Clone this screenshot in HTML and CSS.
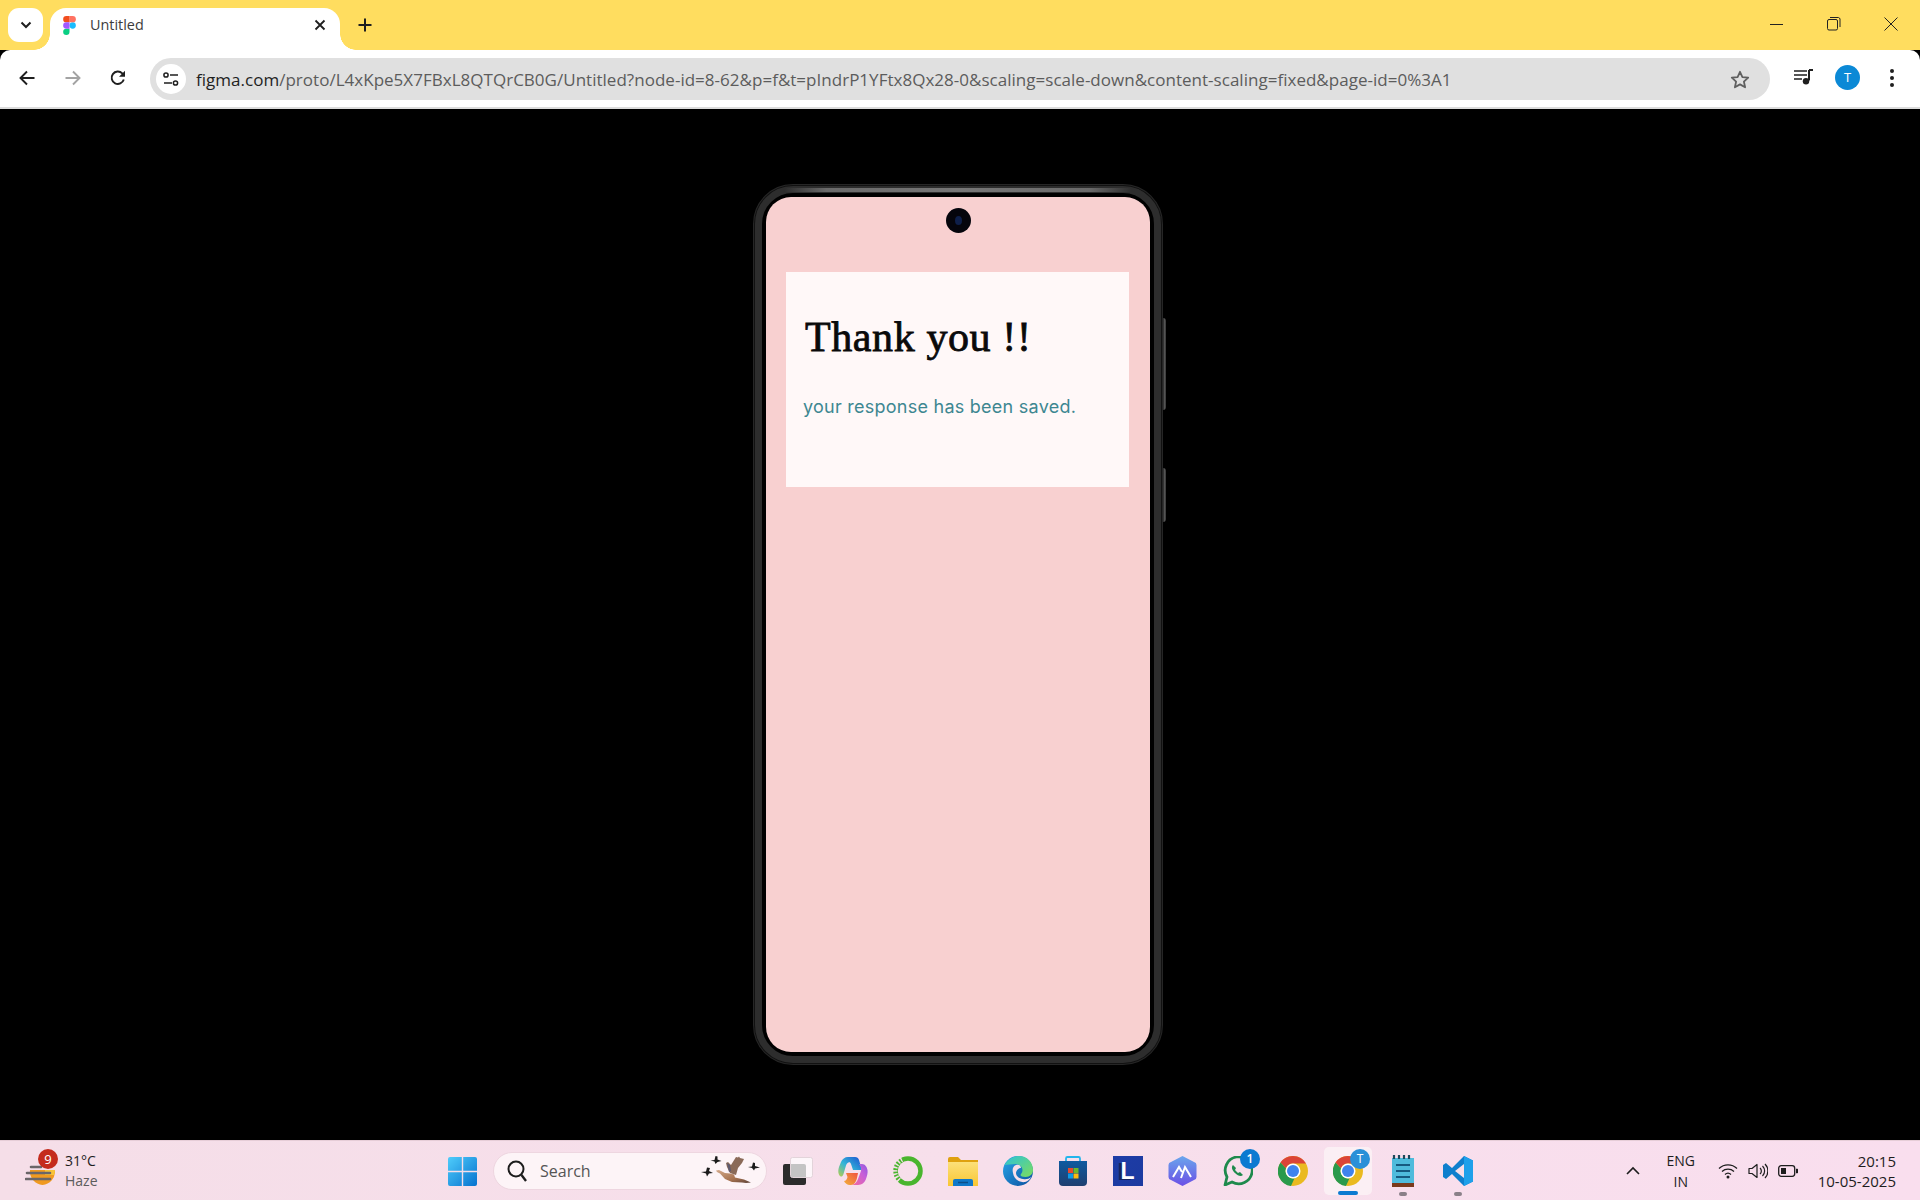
FILE: index.html
```html
<!DOCTYPE html>
<html lang="en">
<head>
<meta charset="utf-8">
<title>Untitled</title>
<link rel="stylesheet" href="styles.css">
</head>
<body>
<div class="app">
  <header class="tabstrip">
    <button class="tab-menu">
      <svg width="12" height="8" viewBox="0 0 12 8"><path d="M1.500 1.500 6 6l4.500-4.500" fill="none" stroke="#1f1f1f" stroke-width="2"/></svg>
    </button>
    <div class="tab">
      <svg class="favicon" width="13" height="19" viewBox="0 0 38 57">
        <path d="M19 28.500a9.500 9.500 0 1 1 19 0 9.500 9.500 0 0 1-19 0z" fill="#1abcfe"/>
        <path d="M0 47.500A9.500 9.500 0 0 1 9.500 38H19v9.500a9.500 9.500 0 0 1-19 0z" fill="#0acf83"/>
        <path d="M19 0v19h9.500a9.500 9.500 0 0 0 0-19H19z" fill="#ff7262"/>
        <path d="M0 9.500A9.500 9.500 0 0 0 9.500 19H19V0H9.500A9.500 9.500 0 0 0 0 9.500z" fill="#f24e1e"/>
        <path d="M0 28.500A9.500 9.500 0 0 0 9.500 38H19V19H9.500A9.500 9.500 0 0 0 0 28.500z" fill="#a259ff"/>
      </svg>
      <span class="tab-title">Untitled</span>
      <svg class="tab-close" width="12" height="12" viewBox="0 0 12 12"><path d="M1.500 1.500l9 9m0-9l-9 9" stroke="#1f1f1f" stroke-width="1.800"/></svg>
    </div>
    <svg class="new-tab" width="14" height="14" viewBox="0 0 14 14"><path d="M7 .5v13M.5 7h13" stroke="#1f1f1f" stroke-width="2"/></svg>
    <div class="win-controls">
      <svg width="14" height="14" viewBox="0 0 14 14"><path d="M0 7.500h13" stroke="#222" stroke-width="1"/></svg>
      <svg width="14" height="14" viewBox="0 0 14 14"><rect x=".5" y="2.500" width="10" height="10.500" rx="1.500" fill="none" stroke="#222"/><path d="M3 .5h8.500a2 2 0 0 1 1.500 1.500v8" fill="none" stroke="#222"/></svg>
      <svg width="14" height="14" viewBox="0 0 14 14"><path d="M.5.5l13 13m0-13l-13 13" stroke="#222" stroke-width="1"/></svg>
    </div>
  </header>

  <nav class="toolbar">
    <svg class="nav-icon" width="16" height="16" viewBox="0 0 16 16"><path d="M15.500 8H1.500M8 1.500 1.500 8 8 14.500" fill="none" stroke="#1f1f1f" stroke-width="1.900"/></svg>
    <svg class="nav-icon" width="16" height="16" viewBox="0 0 16 16"><path d="M.5 8h14M8 1.500 14.500 8 8 14.500" fill="none" stroke="#a3a3a3" stroke-width="1.900"/></svg>
    <svg class="nav-icon" width="16" height="16" viewBox="0 0 16 16"><path d="M13.800 9.500A6.200 6.200 0 1 1 12.300 3.400L14.200 5.300" fill="none" stroke="#1f1f1f" stroke-width="1.900"/><path d="M15 .8v6h-6z" fill="#1f1f1f"/></svg>
    <div class="omnibox">
      <span class="site-info">
        <svg width="16" height="14" viewBox="0 0 16 14"><circle cx="3" cy="3" r="2.100" fill="none" stroke="#1f1f1f" stroke-width="1.500"/><path d="M7 3h8M1 11h8" stroke="#1f1f1f" stroke-width="1.600"/><circle cx="12.500" cy="11" r="2.100" fill="none" stroke="#1f1f1f" stroke-width="1.500"/></svg>
      </span>
      <span class="url"><span class="url-host">figma.com</span>/proto/L4xKpe5X7FBxL8QTQrCB0G/Untitled?node-id=8-62&amp;p=f&amp;t=pIndrP1YFtx8Qx28-0&amp;scaling=scale-down&amp;content-scaling=fixed&amp;page-id=0%3A1</span>
      <svg class="star" width="20" height="19" viewBox="0 0 20 19"><path d="M10 1.800l2.400 5.300 5.800.6-4.300 3.900 1.200 5.700L10 14.400l-5.100 2.900 1.200-5.700L1.800 7.700l5.800-.6z" fill="none" stroke="#5f5f5f" stroke-width="1.800" stroke-linejoin="round"/></svg>
    </div>
    <svg class="media" width="20" height="16" viewBox="0 0 20 16"><path d="M0 2h13M0 6h13M0 10h8" stroke="#1f1f1f" stroke-width="1.700"/><path d="M15 1v10.500" stroke="#1f1f1f" stroke-width="2"/><path d="M15 1h4" stroke="#1f1f1f" stroke-width="2"/><circle cx="12" cy="12.300" r="3.200" fill="#1f1f1f"/></svg>
    <span class="avatar">T</span>
    <svg class="dots" width="4" height="18" viewBox="0 0 4 18"><circle cx="2" cy="2" r="2" fill="#1f1f1f"/><circle cx="2" cy="9" r="2" fill="#1f1f1f"/><circle cx="2" cy="16" r="2" fill="#1f1f1f"/></svg>
  </nav>

  <main class="stage">
    <div class="phone">
      <span class="phone-shine"></span>
      <span class="side-btn side-btn-a"></span>
      <span class="side-btn side-btn-b"></span>
      <div class="bezel">
        <div class="screen">
          <span class="camera"><span class="lens"></span></span>
          <section class="card">
            <h1 class="card-title">Thank you !!</h1>
            <p class="card-text">your response has been saved.</p>
          </section>
        </div>
      </div>
    </div>
  </main>

  <footer class="taskbar">
    <div class="weather">
      <span class="weather-icon">
        <svg width="30" height="24" viewBox="0 0 30 24">
          <path d="M5 8h25a13 14 0 0 1-12.500 15A13 14 0 0 1 5 8z" fill="#f09a20"/>
          <path d="M20 8h10a12 12 0 0 1-1 5H20z" fill="#f7c33a"/>
          <path d="M6 5h10M2 11h23M1 17h24" stroke="#6a6669" stroke-width="2.600" stroke-linecap="round"/>
        </svg>
        <span class="weather-badge">9</span>
      </span>
      <span class="weather-text"><span>31°C</span><span class="weather-sub">Haze</span></span>
    </div>
    <div class="win-start">
      <svg width="29" height="29" viewBox="0 0 29 29">
        <defs><linearGradient id="winblue" x1="0" y1="0" x2="1" y2="1"><stop offset="0" stop-color="#4fcdfb"/><stop offset="1" stop-color="#0672cf"/></linearGradient></defs>
        <path d="M0 2a2 2 0 0 1 2-2h11.800v13.800H0zM15.200 0H27a2 2 0 0 1 2 2v11.800H15.200zM0 15.200h13.800V29H2a2 2 0 0 1-2-2zM15.200 15.200H29V27a2 2 0 0 1-2 2H15.200z" fill="url(#winblue)"/>
      </svg>
    </div>
    <div class="search">
      <svg width="22" height="24" viewBox="0 0 22 24"><circle cx="10" cy="10" r="7.500" fill="none" stroke="#1d1d1d" stroke-width="2"/><path d="M15.500 16l4.500 6" stroke="#1d1d1d" stroke-width="2.300"/></svg>
      <span class="search-text">Search</span>
      <svg class="goose" width="68" height="32" viewBox="0 0 68 32">
        <defs><linearGradient id="goosebody" x1="0" y1="0" x2="1" y2="1"><stop offset="0" stop-color="#d4a98a"/><stop offset=".6" stop-color="#a5714f"/><stop offset="1" stop-color="#5b4238"/></linearGradient></defs>
        <path d="M16 15.500l3-.5 6 3 5 .5 4 1 1 3 9 2 7 3-5 .5-4-.5-10-.5-7-3-5-5.500-3-1.500z" fill="url(#goosebody)"/>
        <path d="M26 8l2-1 3 3 5-8 2 .5 1-1 1 1.500 4 1-2 4-4 5-2 7-6-2-3-6z" fill="#8a6a58"/>
        <path d="M27 8l3 2 1 6-2 1z" fill="#5e5a70"/>
        <path d="M1 17l5-.5 1-4 3 .5-1 3 4 2-4 .5-2 3-1-3zM10.500 5.500l4-.5 1-4 2 .5 0 3 4 1.500-4 1-2 2-1-2.500zM48 12l4-.5 1-4 2 .5 0 3 5 1.500-5 1-1 2-2-2.500z" fill="#1b1b1b"/>
      </svg>
    </div>
    <div class="apps">
      <span class="app-slot">
        <svg width="30" height="28" viewBox="0 0 30 28"><rect x="0" y="7" width="23" height="21" rx="2" fill="#2b2b2b"/><rect x="7.500" y=".5" width="22" height="20" rx="2" fill="#ffffff" fill-opacity=".72" stroke="#e3d4da"/></svg>
      </span>
      <span class="app-slot">
        <svg width="30" height="28" viewBox="0 0 30 28">
          <defs>
            <linearGradient id="cop1" x1="0" y1="1" x2="1" y2="0"><stop offset="0" stop-color="#b8cf4a"/><stop offset=".45" stop-color="#33b5d8"/><stop offset="1" stop-color="#1b4fd0"/></linearGradient>
            <linearGradient id="cop2" x1="0" y1="1" x2="1" y2="0"><stop offset="0" stop-color="#f46a9a"/><stop offset=".6" stop-color="#c860d8"/><stop offset="1" stop-color="#8a58e0"/></linearGradient>
            <linearGradient id="cop3" x1="0" y1="1" x2="1" y2="0"><stop offset="0" stop-color="#f2b03a"/><stop offset="1" stop-color="#f0543f"/></linearGradient>
          </defs>
          <path d="M10 0h7c2 0 3.500 1 4 3l3 10h-9l-2-6c-.5-1.500-1.500-2-2.500-1.500C9 6 8.500 7 8 8.500L5.500 17c-.5 2-2 3.500-3.500 2C.3 17.500-.3 14 1 10l2-5C4 2 7 0 10 0z" fill="url(#cop1)"/>
          <path d="M21 7h3c3 0 5 3 5.500 6s-.5 6-1.500 9-4 6-8 6h-6c3-1 5-3 6-6l3-8c.5-1.500 0-5-2-7z" fill="url(#cop2)"/>
          <path d="M8 16h12l-1 5c-1 4-3 7-6 7h-1c-3 0-5-2-6-4 2 0 3-2 3.500-4z" fill="url(#cop3)"/>
        </svg>
      </span>
      <span class="app-slot">
        <svg width="30" height="30" viewBox="0 0 30 30"><circle cx="15" cy="15" r="12.500" fill="none" stroke="#49b52e" stroke-width="4.500"/><path d="M9 3.500A12.500 12.500 0 0 0 7 25" fill="none" stroke="#f7dfe9" stroke-width="5" stroke-dasharray="1.500 1.800"/></svg>
      </span>
      <span class="app-slot">
        <svg width="30" height="30" viewBox="0 0 30 30">
          <defs><linearGradient id="fold" x1="0" y1="0" x2="0" y2="1"><stop offset="0" stop-color="#fce07a"/><stop offset="1" stop-color="#f9c632"/></linearGradient></defs>
          <path d="M0 3a2 2 0 0 1 2-2h8l3 3h17v4H0z" fill="#dfa10f"/><path d="M0 6h30v24H0z" fill="url(#fold)"/><path d="M5 25a2 2 0 0 1 2-2h16a2 2 0 0 1 2 2v5H5z" fill="#0f78c9"/><path d="M10 26.500h10" stroke="#0b4f8a" stroke-width="1.500"/></svg>
      </span>
      <span class="app-slot">
        <svg width="30" height="30" viewBox="0 0 30 30">
          <defs>
            <linearGradient id="edge1" x1="0" y1="0" x2="1" y2="1"><stop offset="0" stop-color="#28a8ea"/><stop offset="1" stop-color="#0b4f9e"/></linearGradient>
            <linearGradient id="edge2" x1="0" y1="0" x2="1" y2="1"><stop offset="0" stop-color="#2cc3d8"/><stop offset="1" stop-color="#7ddc5c"/></linearGradient>
          </defs>
          <circle cx="15" cy="15" r="15" fill="url(#edge1)"/>
          <path d="M1.500 9C5 3 11 0 16 0c8 0 14 6 14 14 0 4-3 7-7.500 7-3 0-5-1-5-2 0-1 2-2 2-5 0-3-3-6-7-6-5 0-8 1-11 1z" fill="url(#edge2)"/>
          <path d="M18 12c0-3-3-4-5-3-3 1-4 4-3 8 1 6 6 10 12 9 3-1 5-2.500 6-5-2 2-5 2.500-8 2-4-.5-7-3-7-6 0-3 3-5 5-5z" fill="#f7dfe9"/>
        </svg>
      </span>
      <span class="app-slot">
        <svg width="28" height="30" viewBox="0 0 28 30">
          <defs><linearGradient id="bag" x1="0" y1="0" x2="0" y2="1"><stop offset="0" stop-color="#0f5aa0"/><stop offset="1" stop-color="#1f3f70"/></linearGradient></defs>
          <path d="M7 6V2.500A1.500 1.500 0 0 1 8.500 1h11A1.500 1.500 0 0 1 21 2.500V6" fill="none" stroke="#22b5ec" stroke-width="1.800"/>
          <path d="M0 5h28v21a4 4 0 0 1-4 4H4a4 4 0 0 1-4-4z" fill="url(#bag)"/>
          <rect x="9" y="12" width="5" height="5" fill="#e8492d"/><rect x="14.500" y="12" width="5" height="5" fill="#6cb82d"/><rect x="9" y="17.500" width="5" height="5" fill="#0d9be8"/><rect x="14.500" y="17.500" width="5" height="5" fill="#fcb90f"/>
        </svg>
      </span>
      <span class="app-slot"><span class="l-tile">L</span></span>
      <span class="app-slot">
        <svg width="29" height="30" viewBox="0 0 29 30">
          <defs><linearGradient id="arc" x1="0" y1="0" x2="0" y2="1"><stop offset="0" stop-color="#6aa6ec"/><stop offset="1" stop-color="#6b4fe6"/></linearGradient></defs>
          <path d="M14.500 0 26 6a3 3 0 0 1 2.500 3v12a3 3 0 0 1-2.500 3l-11.500 6L3 24a3 3 0 0 1-2.500-3V9A3 3 0 0 1 3 6z" fill="url(#arc)"/>
          <path d="M5 21 11 11l3 5M13 22l4-11 6 10" fill="none" stroke="#fff" stroke-width="2"/>
        </svg>
      </span>
      <span class="app-slot">
        <svg width="30" height="30" viewBox="0 0 30 30"><path d="M2 29l2-8A13.500 13.500 0 1 1 9 26z" fill="none" stroke="#1e8a4c" stroke-width="2.800" stroke-linejoin="round"/><path d="M10 9c-2 2-1 5 2 8s6 4 8 2l-3-3-2 1-3-3 1-2z" fill="#1e8a4c"/></svg>
        <span class="app-badge">1</span>
      </span>
      <span class="app-slot">
        <svg width="30" height="30" viewBox="0 0 30 30"><use href="#chrome-mark"/></svg>
      </span>
      <span class="app-slot app-slot-active">
        <svg width="30" height="30" viewBox="0 0 30 30">
          <defs>
            <g id="chrome-mark">
              <circle cx="15" cy="15" r="15" fill="#eaba20"/>
              <path d="M15 0a15 15 0 0 1 13 7.500H15a7.500 7.500 0 0 0-7 5L2.500 6.500A15 15 0 0 1 15 0z" fill="#db4437"/>
              <path d="M2.500 6.500 8 12.500a7.500 7.500 0 0 0 8.500 9.800L13 30A15 15 0 0 1 2.500 6.500z" fill="#2a9a4c"/>
              <circle cx="15" cy="15" r="7.500" fill="#fff"/>
              <circle cx="15" cy="15" r="6" fill="#3f83ed"/>
            </g>
          </defs>
          <use href="#chrome-mark"/>
        </svg>
        <span class="app-badge app-badge-t">T</span>
        <span class="app-run app-run-active"></span>
      </span>
      <span class="app-slot">
        <svg width="22" height="32" viewBox="0 0 22 32"><path d="M0 3h22v25H0z" fill="#4fbbdc"/><path d="M0 28h22v4H0z" fill="#7a3a1c"/><path d="M2 0v4M7 0v4M12 0v4M17 0v4" stroke="#1d4a5c" stroke-width="2.200"/><path d="M4 10h14M4 16h14M4 22h14" stroke="#165a80" stroke-width="2"/></svg>
        <span class="app-run"></span>
      </span>
      <span class="app-slot">
        <svg width="30" height="30" viewBox="0 0 30 30"><path d="M21 0l9 4.500v21L21 30 9 18l-6 5-3-2v-12l3-2 6 5z" fill="#0f7fcd"/><path d="M21 0l9 4.500v21L21 30z" fill="#1ea0ea"/><path d="M21 8l-9 7 9 7z" fill="#f7dfe9"/></svg>
        <span class="app-run"></span>
      </span>
    </div>
    <div class="tray">
      <svg class="tray-chevron" width="14" height="9" viewBox="0 0 14 9"><path d="M1 8l6-6 6 6" fill="none" stroke="#1d1d1d" stroke-width="1.600"/></svg>
      <span class="tray-lang"><span>ENG</span><span>IN</span></span>
      <span class="tray-icons">
        <svg width="20" height="16" viewBox="0 0 20 16"><path d="M1 5.500a13 13 0 0 1 18 0M4 8.500a9 9 0 0 1 12 0M7 11.500a4.500 4.500 0 0 1 6 0" fill="none" stroke="#1d1d1d" stroke-width="1.300"/><circle cx="10" cy="14" r="1.500" fill="#1d1d1d"/></svg>
        <svg width="20" height="18" viewBox="0 0 20 18"><path d="M1 6.500h3L9 2.500v13L4 11.500H1z" fill="none" stroke="#1d1d1d" stroke-width="1.200" stroke-linejoin="round"/><path d="M12 6a4 4 0 0 1 0 6M14.500 4a7 7 0 0 1 0 10M17 2a10 10 0 0 1 0 14" fill="none" stroke="#1d1d1d" stroke-width="1.200"/></svg>
        <svg width="20" height="12" viewBox="0 0 20 12"><rect x=".7" y=".7" width="16" height="10.600" rx="2.500" fill="none" stroke="#1d1d1d" stroke-width="1.300"/><rect x="3" y="3" width="5" height="6" fill="#1d1d1d"/><path d="M18.500 4v4a2 2 0 0 0 0-4z" fill="#1d1d1d" stroke="#1d1d1d"/></svg>
      </span>
      <span class="tray-clock"><span>20:15</span><span>10-05-2025</span></span>
    </div>
  </footer>
</div>
</body>
</html>
```
FILE: styles.css
```css
* { box-sizing: border-box; }
html, body { margin: 0; height: 100%; }
body { background: #000; font-family: "Open Sans", "Liberation Sans", sans-serif; overflow: hidden; }
.app { display: flex; flex-direction: column; height: 1200px; }

/* tab strip */
.tabstrip { flex: 0 0 50px; background: #ffdd5f; display: flex; align-items: flex-end; padding-left: 8px; }
.tab-menu { width: 35px; height: 34px; margin-bottom: 8px; border: 0; border-radius: 11px; display: flex; align-items: center; justify-content: center; padding: 0; background: #fff; }
.tab { position: relative; margin-left: 7px; width: 290px; height: 42px; background: #fff; border-radius: 16px 16px 0 0; display: flex; align-items: center; padding: 0 14px 8px 13px; }
.tab::before, .tab::after { content: ""; position: absolute; bottom: 0; width: 16px; height: 16px; }
.tab::before { left: -16px; background: radial-gradient(circle at 0 0, transparent 15.500px, #fff 16px); }
.tab::after { right: -16px; background: radial-gradient(circle at 100% 0, transparent 15.500px, #fff 16px); }
.favicon { flex: none; }
.tab-title { margin-left: 14px; font-size: 14.400px; color: #3c3c3c; flex: 1; line-height: 20px; }
.tab-close { flex: none; }
.new-tab { margin: 0 0 18px 18px; position: relative; }
.win-controls { margin-left: auto; display: flex; align-items: center; gap: 43px; padding: 0 22px 0 0; height: 50px; align-self: flex-start; }
.win-controls svg { display: block; margin-top: -2px; }

/* toolbar */
.toolbar { flex: 0 0 57px; background: #fff; border-radius: 10px 10px 0 0; display: flex; align-items: center; padding: 0 21px 0 19px; position: relative; }
.nav-icon { flex: none; margin-right: 30px; margin-top: -1px; }
.nav-icon:nth-child(2) { margin-right: 29px; }
.nav-icon:nth-child(3) { margin-right: 24px; }
.omnibox { width: 1620px; height: 42px; flex: none; margin-top: 1px; border-radius: 21px; background: #e0e0e0; display: flex; align-items: center; padding-left: 6px; padding-right: 20px; }
.site-info { width: 30px; height: 30px; border-radius: 50%; background: #fff; display: flex; align-items: center; justify-content: center; flex: none; }
.url { margin-left: 10px; font-size: 17px; color: #5c5c5c; flex: 1; white-space: nowrap; letter-spacing: .02px; }
.url-host { color: #1f1f1f; }
.star { flex: none; }
.media { flex: none; margin-left: 24px; margin-top: -3px; }
.avatar { flex: none; margin-left: 21px; width: 25px; height: 25px; margin-top: -2px; border-radius: 50%; background: #0b89d6; color: #fff; font-size: 13px; line-height: 25px; text-align: center; }
.dots { flex: none; margin-left: 30px; margin-top: -2px; }

/* stage */
.stage { flex: 1; min-height: 0; border-top: 2px solid #dcdcdc; background: #000; display: flex; align-items: center; justify-content: center; padding-right: 4px; }
.phone { position: relative; width: 410px; height: 881px; border: 2px solid #262626; border-radius: 40px; }
.phone-shine { position: absolute; top: 2px; left: 30px; right: 30px; height: 4px; border-radius: 2px; background: linear-gradient(90deg, #2e2e2e, #6a6a6a 12%, #767676 50%, #6a6a6a 88%, #2e2e2e); }
.side-btn { position: absolute; right: -5px; width: 3px; border-radius: 0 3px 3px 0; background: linear-gradient(90deg, #222, #5e5e5e 60%, #2a2a2a); }
.side-btn-a { top: 132px; height: 92px; }
.side-btn-b { top: 282px; height: 54px; }
.bezel { height: 100%; border: 7px solid #2d2d2d; border-radius: 38px; padding: 4px; background: #000; box-shadow: inset 0 0 0 0 #000, 0 0 0 1px #111; }
.screen { position: relative; height: 100%; background: #f8d0d0; border-radius: 25px; padding: 75px 21px 0 20px; }
.camera { position: absolute; top: 11px; left: 50%; margin-left: -12.500px; width: 25px; height: 25px; border-radius: 50%; background: #05050c; display: flex; align-items: center; justify-content: center; }
.lens { width: 7px; height: 9px; border-radius: 50%; background: #0e1f4a; }
.card { height: 215px; background: #fff8f8; padding: 40px 0 0 19px; }
.card-title { margin: 0; font-family: "Liberation Serif", serif; font-weight: 400; font-size: 42px; line-height: 50px; color: #0a0a0a; -webkit-text-stroke: .8px #0a0a0a; letter-spacing: .6px; }
.card-text { margin: 33px 0 0 -2px; font-family: "Inter", sans-serif; font-size: 18px; line-height: 24px; color: #3d8791; letter-spacing: .25px; }

/* taskbar */
.taskbar { flex: 0 0 60px; background: linear-gradient(90deg, #f5dee8, #f7dfeb 50%, #f9deee); border-top: 1px solid #e6cdd7; display: flex; align-items: center; position: relative; }
.weather { width: 435px; flex: none; display: flex; align-items: center; padding-left: 25px; }
.weather-icon { position: relative; display: block; width: 30px; height: 24px; margin-top: 6px; }
.weather-icon svg { display: block; }
.weather-badge { position: absolute; left: 13px; top: -13px; width: 20px; height: 20px; border-radius: 50%; background: #c42b1c; color: #fff; font-size: 13px; line-height: 20px; text-align: center; }
.weather-text { display: flex; flex-direction: column; margin-left: 10px; font-size: 14px; line-height: 20px; color: #1d1d1d; }
.weather-sub { color: #5c5c5c; }
.win-start { width: 55px; flex: none; display: flex; justify-content: center; margin-top: 1px; }
.win-start svg { display: block; }
.search { width: 274px; height: 38px; margin-left: 3px; flex: none; background: #fdf4f7; border-radius: 19px; border: 1px solid #eed6e0; display: flex; align-items: center; padding-left: 12px; }
.search-text { margin-left: 12px; font-size: 16px; color: #555; flex: 1; }
.goose { flex: none; margin-right: -2px; }
.apps { display: flex; margin-left: 3px; flex: none; }
.app-slot { position: relative; width: 55px; height: 48px; display: flex; align-items: center; justify-content: center; }
.app-slot svg { display: block; }
.app-slot-active::before { content: ""; position: absolute; left: 4px; right: 5px; top: 0; bottom: 0; background: #fbeff4; border-radius: 5px; box-shadow: 2px 0 0 #fbeff4; }
.app-slot-active svg { position: relative; }
.l-tile { width: 30px; height: 30px; background: linear-gradient(135deg, #1d3ca6, #1c3aa0); color: #fff; font-family: "Liberation Sans", sans-serif; font-weight: 700; font-size: 23px; line-height: 30px; text-align: center; text-shadow: -3px 1px 0 #14245f; }
.app-badge { position: absolute; left: 30px; top: 2px; width: 20px; height: 20px; border-radius: 50%; background: #0b7ad1; color: #fff; font-size: 12px; font-weight: 600; line-height: 20px; text-align: center; }
.app-badge-t { background: #2a90d8; font-weight: 400; }
.app-run { position: absolute; left: 50%; bottom: -1px; width: 8px; height: 4px; margin-left: -4px; border-radius: 2px; background: #8a8088; }
.app-run-active { width: 20px; margin-left: -10px; background: #0b7ad1; bottom: 0; }
.tray { margin-left: auto; flex: none; display: flex; align-items: center; padding-right: 24px; color: #1d1d1d; font-size: 14px; line-height: 21px; }
.tray-chevron { display: block; margin-right: 26px; }
.tray-lang { display: flex; flex-direction: column; align-items: center; width: 30px; margin-right: 22px; }
.tray-icons { display: flex; align-items: center; gap: 10px; }
.tray-icons svg { display: block; }
.tray-clock { display: flex; flex-direction: column; align-items: flex-end; margin-left: 20px; font-size: 15px; line-height: 20px; }
```
